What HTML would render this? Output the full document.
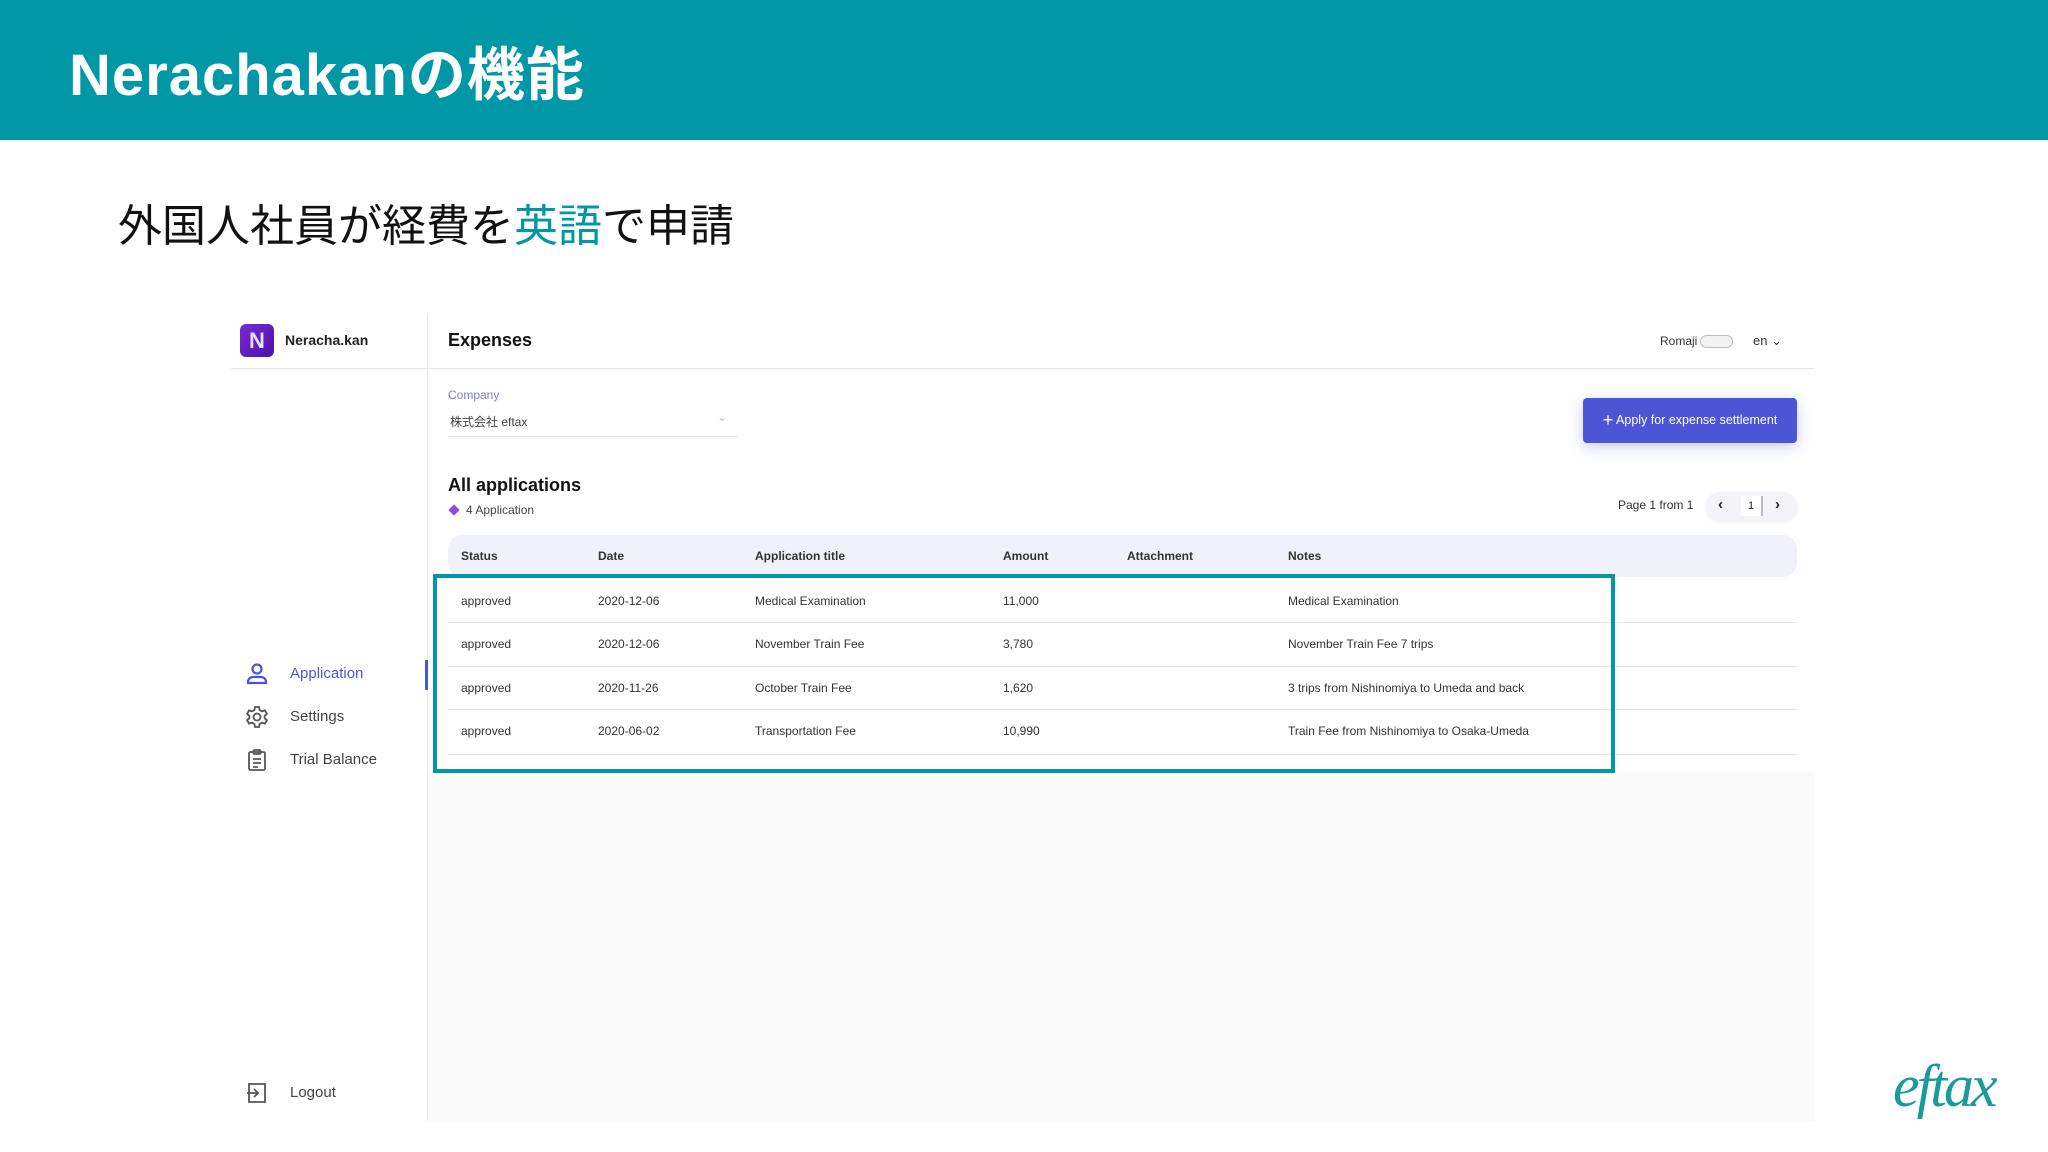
<!DOCTYPE html>
<html><head><meta charset="utf-8"><style>
*{margin:0;padding:0;box-sizing:border-box}
body{width:2048px;height:1152px;background:#fff;position:relative;overflow:hidden;font-family:"Liberation Sans","Noto Sans CJK JP",sans-serif;color:#222}
.a{position:absolute;white-space:nowrap}
.hdr{left:0;top:0;width:2048px;height:140px;background:#0097a7}
.t{left:69px;top:28px;font-size:58px;font-weight:bold;color:#fff;letter-spacing:1px}
.sub{left:118px;top:190px;font-size:44px;color:#111}
.th{font-size:12px;font-weight:bold;color:#333}
.td{font-size:12px;color:#333}
.nav{font-size:15px;color:#444}
.line{height:1px;background:#e6e6ec}
</style></head><body>
<div class="a hdr"></div>
<div class="a t">Nerachakanの機能</div>
<div class="a sub">外国人社員が経費を<span style="color:#0097a7">英語</span>で申請</div>

<div class="a" style="left:428px;top:772px;width:1387px;height:349px;background:#fafafb"></div>
<div class="a" style="left:427px;top:315px;width:1px;height:806px;background:#e8e8ee"></div>
<div class="a line" style="left:231px;top:368px;width:1584px"></div>

<div class="a" style="left:240px;top:324px;width:34px;height:33px;border-radius:6px;background:linear-gradient(135deg,#7a2bd6,#4b10a8);color:#e8dcff;font-weight:bold;font-size:22px;text-align:center;line-height:33px">N</div>
<div class="a" style="left:285px;top:332px;font-size:14px;font-weight:bold">Neracha.kan</div>
<div class="a" style="left:448px;top:330px;font-size:18px;font-weight:bold;color:#111">Expenses</div>
<div class="a" style="left:1660px;top:334px;font-size:12px;color:#333">Romaji</div>
<div class="a" style="left:1700px;top:335px;width:33px;height:13px;border:1px solid #bbb;border-radius:7px;background:#f2f2f2"></div>
<div class="a" style="left:1753px;top:333px;font-size:13px;color:#333">en ⌄</div>

<div class="a" style="left:448px;top:388px;font-size:12px;color:#7b7fd4">Company</div>
<div class="a" style="left:450px;top:413px;font-size:12px;color:#444">株式会社 eftax</div>
<div class="a" style="left:717px;top:410px;font-size:12px;color:#bbb">⌄</div>
<div class="a line" style="left:448px;top:436px;width:290px"></div>

<div class="a" style="left:1583px;top:398px;width:214px;height:45px;background:#4b55d6;border-radius:4px;box-shadow:0 4px 14px rgba(75,85,214,.3);color:#fff;font-size:12.5px;text-align:center;line-height:45px"><span style="font-size:18px;vertical-align:-2px">+</span> Apply for expense settlement</div>

<div class="a" style="left:448px;top:475px;font-size:18px;font-weight:bold;color:#111">All applications</div>
<div class="a" style="left:450px;top:506px;width:8px;height:8px;background:#8a4fd8;transform:rotate(45deg)"></div>
<div class="a" style="left:466px;top:503px;font-size:12px;color:#444">4 Application</div>
<div class="a" style="left:1618px;top:498px;font-size:12px;color:#333">Page 1 from 1</div>
<div class="a" style="left:1706px;top:492px;width:91px;height:28px;border-radius:14px;background:#f3f3f8;box-shadow:0 2px 5px rgba(0,0,0,.08)"></div>
<div class="a" style="left:1718px;top:496px;font-size:15px;font-weight:bold">‹</div>
<div class="a" style="left:1741px;top:496px;width:22px;height:20px;background:#fff;font-size:11px;text-align:center;line-height:20px;border-right:2px solid #bbb">1</div>
<div class="a" style="left:1775px;top:496px;font-size:15px;font-weight:bold">›</div>

<div class="a" style="left:448px;top:535px;width:1349px;height:42px;background:#f1f1fb;border-radius:14px"></div>
<div class="a th" style="left:461px;top:549px">Status</div>
<div class="a th" style="left:598px;top:549px">Date</div>
<div class="a th" style="left:755px;top:549px">Application title</div>
<div class="a th" style="left:1003px;top:549px">Amount</div>
<div class="a th" style="left:1127px;top:549px">Attachment</div>
<div class="a th" style="left:1288px;top:549px">Notes</div>

<div class="a line" style="left:448px;top:622px;width:1349px"></div>
<div class="a line" style="left:448px;top:666px;width:1349px"></div>
<div class="a line" style="left:448px;top:709px;width:1349px"></div>
<div class="a line" style="left:448px;top:754px;width:1349px"></div>

<div class="a td" style="left:461px;top:594px">approved</div><div class="a td" style="left:598px;top:594px">2020-12-06</div><div class="a td" style="left:755px;top:594px">Medical Examination</div><div class="a td" style="left:1003px;top:594px">11,000</div><div class="a td" style="left:1288px;top:594px">Medical Examination</div>
<div class="a td" style="left:461px;top:637px">approved</div><div class="a td" style="left:598px;top:637px">2020-12-06</div><div class="a td" style="left:755px;top:637px">November Train Fee</div><div class="a td" style="left:1003px;top:637px">3,780</div><div class="a td" style="left:1288px;top:637px">November Train Fee 7 trips</div>
<div class="a td" style="left:461px;top:681px">approved</div><div class="a td" style="left:598px;top:681px">2020-11-26</div><div class="a td" style="left:755px;top:681px">October Train Fee</div><div class="a td" style="left:1003px;top:681px">1,620</div><div class="a td" style="left:1288px;top:681px">3 trips from Nishinomiya to Umeda and back</div>
<div class="a td" style="left:461px;top:724px">approved</div><div class="a td" style="left:598px;top:724px">2020-06-02</div><div class="a td" style="left:755px;top:724px">Transportation Fee</div><div class="a td" style="left:1003px;top:724px">10,990</div><div class="a td" style="left:1288px;top:724px">Train Fee from Nishinomiya to Osaka-Umeda</div>

<div class="a" style="left:433px;top:574px;width:1182px;height:199px;border:4px solid #0097a7"></div>

<svg class="a" style="left:245px;top:662px" width="24" height="24" viewBox="0 0 24 24" fill="none" stroke="#4b55d6" stroke-width="2.2"><circle cx="12" cy="7" r="4.5"/><path d="M3 21v-1a5 5 0 0 1 5-5h8a5 5 0 0 1 5 5v1z"/></svg>
<div class="a nav" style="left:290px;top:665px;color:#4b55d6">Application</div>
<div class="a" style="left:425px;top:660px;width:3px;height:30px;background:#4b55d6"></div>
<svg class="a" style="left:245px;top:705px" width="24" height="24" viewBox="0 0 24 24" fill="none" stroke="#555" stroke-width="1.8"><circle cx="12" cy="12" r="3.5"/><path d="M10 2h4l.6 3 2.4 1.4 2.9-1 2 3.4-2.3 2v2.4l2.3 2-2 3.4-2.9-1L14.6 19 14 22h-4l-.6-3L7 17.6l-2.9 1-2-3.4 2.3-2v-2.4l-2.3-2 2-3.4 2.9 1L9.4 5z"/></svg>
<div class="a nav" style="left:290px;top:708px">Settings</div>
<svg class="a" style="left:245px;top:748px" width="24" height="24" viewBox="0 0 24 24" fill="none" stroke="#555" stroke-width="1.8"><rect x="4" y="4" width="16" height="18" rx="1.5"/><rect x="8.5" y="2" width="7" height="4" rx="1"/><path d="M8 11h8M8 15h8M8 19h5"/></svg>
<div class="a nav" style="left:290px;top:751px">Trial Balance</div>
<svg class="a" style="left:245px;top:1081px" width="24" height="24" viewBox="0 0 24 24" fill="none" stroke="#555" stroke-width="1.8"><path d="M4 3h16v18H4z"/><path d="M2 12h11M9 8l4 4-4 4"/></svg>
<div class="a nav" style="left:290px;top:1084px">Logout</div>

<div class="a" style="left:1893px;top:1052px;font-family:'Liberation Serif',serif;font-style:italic;font-size:60px;color:#1a9a9a;letter-spacing:-3px">eftax</div>
</body></html>
